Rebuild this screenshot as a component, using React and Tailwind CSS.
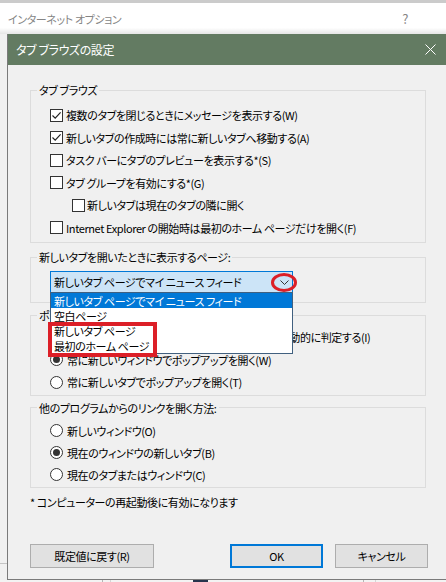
import clsx from 'clsx';

function CheckRow({ checked, label, indent }) {
    return (
        <div className={clsx('flex h-[22.5px] items-center', indent ? 'gap-[2px] pl-[41px]' : 'gap-[3px] pl-[19px]')}>
            <span className="flex size-[13px] shrink-0 items-center justify-center border border-[#333] bg-white">
                {checked && (
                    <svg width="11" height="11" viewBox="0 0 11 11">
                        <path d="M1.5 5.5 L4.2 8.2 L9.6 2.4" fill="none" stroke="#222" strokeWidth="1.2" />
                    </svg>
                )}
            </span>
            <span className="whitespace-nowrap">{label}</span>
        </div>
    );
}

function RadioRow({ checked, label, h = 'h-[22px]' }) {
    return (
        <div className={clsx('flex items-center gap-[4px] pl-[19px]', h)}>
            <span className="flex size-[13px] shrink-0 items-center justify-center rounded-full border border-[#333] bg-white">
                {checked && <span className="size-[7px] rounded-full bg-[#333]" />}
            </span>
            <span className="whitespace-nowrap">{label}</span>
        </div>
    );
}

function Group({ title, className, children }) {
    return (
        <fieldset className={clsx('w-[396px] border border-[#dcdcdc]', className)}>
            <legend className="ml-[6px] h-4 px-[2px] leading-4">{title}</legend>
            {children}
        </fieldset>
    );
}

export default function App() {
    return (
        <div className="relative flex h-[582px] w-[446px] flex-col overflow-hidden bg-[#f0f0f0] font-['Noto_Sans_CJK_JP',sans-serif] text-[11px] leading-4 tracking-[-0.4px] text-black [font-feature-settings:'palt']">
            {/* outer window */}
            <div className="h-[3px] shrink-0 bg-[#cbcbcb]" />
            <div className="flex h-[31px] shrink-0 items-center justify-between bg-linear-to-b from-white from-80% to-[#e6e6e6] pl-[8px] pr-[38px] text-[#858585]">
                <span>インターネット オプション</span>
                <span className="text-[13px]">?</span>
            </div>

            <div className="flex shrink-0">
                <div className="w-[7px] shrink-0">
                    <div className="mt-[529px] h-px bg-[#c4c4c4]" />
                </div>

                {/* dialog */}
                <div className="flex flex-1 flex-col border-b border-l border-[#7a7a7a] bg-[#f0f0f0]">
                    <div className="flex h-[31px] items-center justify-between bg-[#637b62] pl-[8px] pr-[10px] text-[12px] text-white">
                        <span>タブ ブラウズの設定</span>
                        <svg width="11" height="11" viewBox="0 0 11 11">
                            <path d="M0.5 0.5 L10.5 10.5 M10.5 0.5 L0.5 10.5" stroke="white" strokeWidth="1" />
                        </svg>
                    </div>

                    <div className="flex flex-col pb-[11px] pl-[22px] pt-[17px]">
                        <Group title="タブ ブラウズ" className="pb-[3px] pt-[6px]">
                            <CheckRow checked label="複数のタブを閉じるときにメッセージを表示する(W)" />
                            <CheckRow checked label="新しいタブの作成時には常に新しいタブへ移動する(A)" />
                            <CheckRow label="タスク バーにタブのプレビューを表示する*(S)" />
                            <CheckRow label="タブ グループを有効にする*(G)" />
                            <CheckRow indent label="新しいタブは現在のタブの隣に開く" />
                            <CheckRow label="Internet Explorer の開始時は最初のホーム ページだけを開く(F)" />
                        </Group>

                        <Group title="新しいタブを開いたときに表示するページ:" className="mt-[6px] pb-[9px] pt-[6px]">
                            <div className="relative z-10 ml-[19px] flex h-[22px] w-[243px] items-center border border-[#0078d7] bg-[#cce4f7] pl-[3px]">
                                <span className="whitespace-nowrap">新しいタブ ページでマイ ニュース フィード</span>
                                <svg className="absolute left-[229px] top-[8px]" width="9" height="5" viewBox="0 0 9 5">
                                    <path d="M0.5 0.5 L4.5 4.5 L8.5 0.5" fill="none" stroke="#333" strokeWidth="1" />
                                </svg>
                                <span className="absolute left-[220px] top-px h-[19px] w-[26px] rounded-[50%] border-[3px] border-[#dc1f27]" />

                                {/* open dropdown list */}
                                <div className="absolute -left-px top-full w-[243px] border border-[#41607f] bg-white">
                                    <div className="flex h-[15px] items-center bg-[#0078d7] pl-[3px] text-white">
                                        新しいタブ ページでマイ ニュース フィード
                                    </div>
                                    <div className="flex h-[15px] items-center pl-[3px]">空白ページ</div>
                                    <div className="flex h-[15px] items-center pl-[3px]">新しいタブ ページ</div>
                                    <div className="flex h-[15px] items-center pl-[3px]">最初のホーム ページ</div>
                                    <span className="absolute -left-[3px] top-[29px] h-[35px] w-[109px] border-[4px] border-[#dc1f27]" />
                                </div>
                            </div>
                        </Group>

                        <Group title="ポップアップの発生時:" className="mt-[4px] pb-px pt-[3px]">
                            <RadioRow h="h-[22.5px]" label="ポップアップの表示方法を Internet Explorer で自動的に判定する(I)" />
                            <RadioRow h="h-[22.5px]" checked label="常に新しいウィンドウでポップアップを開く(W)" />
                            <RadioRow h="h-[22.5px]" label="常に新しいタブでポップアップを開く(T)" />
                        </Group>

                        <Group title="他のプログラムからのリンクを開く方法:" className="mt-[4px] pb-px pt-[4px]">
                            <RadioRow label="新しいウィンドウ(O)" />
                            <RadioRow checked label="現在のウィンドウの新しいタブ(B)" />
                            <RadioRow label="現在のタブまたはウィンドウ(C)" />
                        </Group>

                        <p className="mt-[6px]">* コンピューターの再起動後に有効になります</p>

                        <div className="mt-[34px] flex">
                            <button className="h-[24px] w-[124px] border border-[#adadad] bg-[#e1e1e1]">既定値に戻す(R)</button>
                            <button className="ml-[76px] h-[24px] w-[93px] border-2 border-[#0078d7] bg-[#e1e1e1]">OK</button>
                            <button className="ml-[12px] h-[24px] w-[93px] border border-[#adadad] bg-[#e1e1e1]">キャンセル</button>
                        </div>
                    </div>
                </div>
            </div>

            {/* strip of the window behind */}
            <div className="flex h-[3px] shrink-0 bg-[#f3f3f3]">
                <div className="ml-[102px] w-px bg-[#b5b5b5]" />
                <div className="ml-[7px] w-px bg-[#d5d5d5]" />
                <div className="ml-[82px] w-[15px] bg-[#27344d]" />
                <div className="ml-[155px] w-px bg-[#b5b5b5]" />
                <div className="ml-[11px] w-px bg-[#d5d5d5]" />
            </div>
        </div>
    );
}
